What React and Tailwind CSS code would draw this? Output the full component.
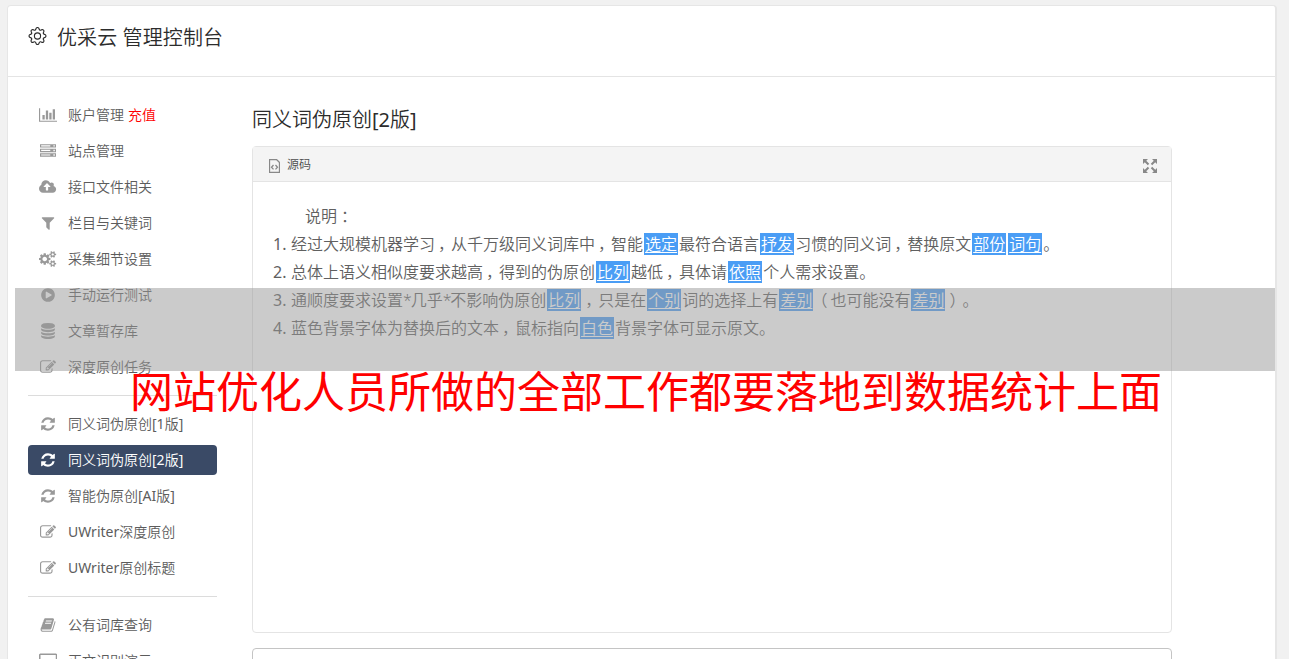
import React from 'react';
import { BsGear } from 'react-icons/bs';

/* ── Icon outlines: [viewBox width, path], all 1792 tall ── */
const icons = {
  chart: [
    2048,
    'M640 896v512h-256v-512h256zM1024 384v1024h-256v-1024h256zM2048 1536v128h-2048v-1536h128v1408h1920zM1408 640v768h-256v-768h256zM1792 256v1152h-256v-1152h256z',
  ],
  server: [
    1792,
    'M0 128h1792v384h-1792zM128 256v128h1024v-128zM1500 240v160h160v-160zM0 640h1792v384h-1792zM128 768v128h1024v-128zM1500 752v160h160v-160zM0 1152h1792v384h-1792zM128 1280v128h1024v-128zM1500 1264v160h160v-160z',
  ],
  cloud: [
    1920,
    'M1280 864q0-14-9-23l-352-352q-9-9-23-9t-23 9l-351 351q-10 12-10 24 0 14 9 23t23 9h224v352q0 13 9.5 22.5t22.5 9.5h192q13 0 22.5-9.5t9.5-22.5v-352h224q13 0 22.5-9.5t9.5-22.5zM1920 1152q0 159-112.5 271.5t-271.5 112.5h-1088q-185 0-316.5-131.5t-131.5-316.5q0-130 70-240t188-165q-2-30-2-43 0-212 150-362t362-150q156 0 285.5 87t188.5 231q71-62 166-62 106 0 181 75t75 181q0 76-41 138 130 31 213.5 135.5t83.5 238.5z',
  ],
  filter: [
    1792,
    'M1595 295q17 41-14 70l-493 493v742q0 42-39 59-13 5-25 5-27 0-45-19l-256-256q-19-19-19-45v-486l-493-493q-31-29-14-70 17-39 59-39h1280q42 0 59 39z',
  ],
  cogs: [
    1920,
    'M896 896q0-106-75-181t-181-75-181 75-75 181 75 181 181 75 181-75 75-181zm768 512q0-52-38-90t-90-38-90 38-38 90q0 53 37.5 90.5t90.5 37.5 90.5-37.5 37.5-90.5zm0-1024q0-52-38-90t-90-38-90 38-38 90q0 53 37.5 90.5t90.5 37.5 90.5-37.5 37.5-90.5zm-384 421v185q0 10-7 19.5t-16 10.5l-155 24q-11 35-32 76 34 48 90 115 7 11 7 20 0 12-7 19-23 30-82.5 89.5t-78.5 59.5q-11 0-21-7l-115-90q-37 19-77 31-11 108-23 155-7 24-30 24h-186q-11 0-20-7.5t-10-17.5l-23-153q-34-10-75-31l-118 89q-7 7-20 7-11 0-21-8-144-133-144-160 0-9 7-19 10-14 41-53t47-61q-23-44-35-82l-152-24q-10-1-17-9.5t-7-19.5v-185q0-10 7-19.5t16-10.5l155-24q11-35 32-76-34-48-90-115-7-11-7-20 0-12 7-20 22-30 82-89t79-59q11 0 21 7l115 90q34-18 77-32 11-108 23-154 7-24 30-24h186q11 0 20 7.5t10 17.5l23 153q34 10 75 31l118-89q8-7 20-7 11 0 21 8 144 133 144 160 0 8-7 19-12 16-42 54t-45 60q23 48 34 82l152 23q10 2 17 10.5t7 19.5zm640 533v140q0 16-149 31-12 27-30 52 51 113 51 138 0 4-4 7-122 71-124 71-8 0-46-47t-52-68q-20 2-30 2t-30-2q-14 21-52 68t-46 47q-2 0-124-71-4-3-4-7 0-25 51-138-18-25-30-52-149-15-149-31v-140q0-16 149-31 13-29 30-52-51-113-51-138 0-4 4-7 4-2 35-20t59-34 30-16q8 0 46 46.5t52 67.5q20-2 30-2t30 2q51-71 92-112l6-2q4 0 124 70 4 3 4 7 0 25-51 138 17 23 30 52 149 15 149 31zm0-1024v140q0 16-149 31-12 27-30 52 51 113 51 138 0 4-4 7-122 71-124 71-8 0-46-47t-52-68q-20 2-30 2t-30-2q-14 21-52 68t-46 47q-2 0-124-71-4-3-4-7 0-25 51-138-18-25-30-52-149-15-149-31v-140q0-16 149-31 13-29 30-52-51-113-51-138 0-4 4-7 4-2 35-20t59-34 30-16q8 0 46 46.5t52 67.5q20-2 30-2t30 2q51-71 92-112l6-2q4 0 124 70 4 3 4 7 0 25-51 138 17 23 30 52 149 15 149 31z',
  ],
  play: [
    1792,
    'M896 128q209 0 385.5 103t279.5 279.5 103 385.5-103 385.5-279.5 279.5-385.5 103-385.5-103-279.5-279.5-103-385.5 103-385.5 279.5-279.5 385.5-103zm384 823q32-18 32-55t-32-55l-544-320q-31-19-64-1-32 19-32 56v640q0 37 32 56 16 8 32 8 17 0 32-9z',
  ],
  database: [
    1792,
    'M896 768q237 0 443-43t325-127v170q0 69-103 128t-280 93.5-385 34.5-385-34.5-280-93.5-103-128v-170q119 84 325 127t443 43zm0 768q237 0 443-43t325-127v170q0 69-103 128t-280 93.5-385 34.5-385-34.5-280-93.5-103-128v-170q119 84 325 127t443 43zm0-384q237 0 443-43t325-127v170q0 69-103 128t-280 93.5-385 34.5-385-34.5-280-93.5-103-128v-170q119 84 325 127t443 43zm0-1152q208 0 385 34.5t280 93.5 103 128v128q0 69-103 128t-280 93.5-385 34.5-385-34.5-280-93.5-103-128v-128q0-69 103-128t280-93.5 385-34.5z',
  ],
  edit: [
    1792,
    'M888 1184l116-116-152-152-116 116v56h96v96h56zm440-720q-16-16-33 1l-350 350q-17 17-1 33t33-1l350-350q17-17 1-33zm80 594v190q0 119-84.5 203.5t-203.5 84.5h-832q-119 0-203.5-84.5t-84.5-203.5v-832q0-119 84.5-203.5t203.5-84.5h832q63 0 117 25 15 7 18 23 3 17-9 29l-49 49q-14 14-32 8-23-6-45-6h-832q-66 0-113 47t-47 113v832q0 66 47 113t113 47h832q66 0 113-47t47-113v-126q0-13 9-22l64-64q15-15 35-7t20 29zm-96-738l288 288-672 672h-288v-288zm444 132l-92 92-288-288 92-92q28-28 68-28t68 28l152 152q28 28 28 68t-28 68z',
  ],
  refresh: [
    1792,
    'M1639 1056q0 5-1 7-64 268-268 434.5t-478 166.5q-146 0-282.5-55t-243.5-157l-129 129q-19 19-45 19t-45-19-19-45v-448q0-26 19-45t45-19h448q26 0 45 19t19 45-19 45l-137 137q71 66 161 102t187 36q134 0 250-65t186-179q11-17 53-117 8-23 30-23h192q13 0 22.5 9.5t9.5 22.5zm25-800v448q0 26-19 45t-45 19h-448q-26 0-45-19t-19-45 19-45l138-138q-148-137-349-137-134 0-250 65t-186 179q-11 17-53 117-8 23-30 23h-199q-13 0-22.5-9.5t-9.5-22.5v-7q65-268 270-434.5t480-166.5q146 0 284 55.5t245 156.5l130-129q19-19 45-19t45 19 19 45z',
  ],
  book: [
    1792,
    'M1703 478q40 57 18 129l-275 906q-19 64-76.5 107.5t-122.5 43.5h-923q-77 0-148.5-53.5t-99.5-131.5q-24-67-2-127 0-4 3-27t4-37q1-8-3-21.5t-3-19.5q2-11 8-21t16.5-23.5 16.5-23.5q23-38 45-91.5t30-91.5q3-10 .5-30t-.5-28q3-11 17-28t17-23q21-36 42-92t25-90q1-9-2.5-32t.5-28q4-13 22-30.5t22-22.5q19-26 42.5-84.5t27.5-96.5q1-8-3-25.5t-2-26.5q2-8 9-18t18-23 17-21q8-12 16.5-30.5t15-35 16-36 19.5-32 26.5-23.5 36-11.5 47.5 5.5l-1 3q38-9 51-9h761q74 0 114 56t18 130l-274 906q-36 119-71.5 153.5t-128.5 34.5h-869q-27 0-38 15-11 16-1 43 24 70 144 70h923q29 0 56-15.5t35-41.5l300-987q7-22 5-57 38 15 59 43zm-1064 2q-4 13 2 22.5t20 9.5h608q13 0 25.5-9.5t16.5-22.5l21-64q4-13-2-22.5t-20-9.5h-608q-13 0-25.5 9.5t-16.5 22.5zm-83 256q-4 13 2 22.5t20 9.5h608q13 0 25.5-9.5t16.5-22.5l21-64q4-13-2-22.5t-20-9.5h-608q-13 0-25.5 9.5t-16.5 22.5z',
  ],
  desktop: [
    2048,
    'M160 64h1728q66 0 113 47t47 113v1088q0 66-47 113t-113 47h-1728q-66 0-113-47t-47-113v-1088q0-66 47-113t113-47zM170 234v830h1708v-830z',
  ],
};

const Icon = ({ name }) => {
  const [width, path] = icons[name];
  return (
    <svg viewBox={`0 0 ${width} 1792`} className="h-4 w-auto" fill="currentColor" fillRule="evenodd">
      <path d={path} />
    </svg>
  );
};

const menuGroups = [
  [
    { icon: 'chart', label: '账户管理', extra: '充值' },
    { icon: 'server', label: '站点管理' },
    { icon: 'cloud', label: '接口文件相关' },
    { icon: 'filter', label: '栏目与关键词' },
    { icon: 'cogs', label: '采集细节设置' },
    { icon: 'play', label: '手动运行测试' },
    { icon: 'database', label: '文章暂存库' },
    { icon: 'edit', label: '深度原创任务' },
  ],
  [
    { icon: 'refresh', label: '同义词伪原创[1版]' },
    { icon: 'refresh', label: '同义词伪原创[2版]', active: true },
    { icon: 'refresh', label: '智能伪原创[AI版]' },
    { icon: 'edit', label: 'UWriter深度原创' },
    { icon: 'edit', label: 'UWriter原创标题' },
  ],
  [
    { icon: 'book', label: '公有词库查询' },
    { icon: 'desktop', label: '正文识别演示' },
  ],
];

/* Words in braces are the replaced ones */
const notes = [
  '经过大规模机器学习，从千万级同义词库中，智能{选定}最符合语言{抒发}习惯的同义词，替换原文{部份}{词句}。',
  '总体上语义相似度要求越高，得到的伪原创{比列}越低，具体请{依照}个人需求设置。',
  '通顺度要求设置*几乎*不影响伪原创{比列}，只是在{个别}词的选择上有{差别}（也可能没有{差别}）。',
  '蓝色背景字体为替换后的文本，鼠标指向{白色}背景字体可显示原文。',
];

/* Moves punctuation towards the middle of its cell */
const punctuation = {
  '，': 'pl-[3px] -mr-[3px]',
  '：': 'pl-1 -mr-1',
  '（': '-ml-[3px] pr-[3px]',
  '）': 'pl-[3px] -mr-[3px]',
  '*': '-tracking-[1.2px]',
};

const NoteText = ({ text }) =>
  text.split(/(\{.+?\}|[，：（）*])/).map((part, i) => {
    if (part.startsWith('{')) {
      return (
        <span key={i} className="mx-px bg-[#4a9df5] px-px text-white underline underline-offset-2">
          {part.slice(1, -1)}
        </span>
      );
    }
    if (punctuation[part]) {
      return <span key={i} className={punctuation[part]}>{part}</span>;
    }
    return part;
  });

/* Latin runs are set one step heavier than the Chinese ones */
const Label = ({ text }) =>
  text.split(/([A-Za-z0-9[\]]+)/).map((part, i) =>
    i % 2 ? <span key={i} className="font-normal">{part}</span> : part
  );

const Sidebar = () => (
  <nav className="w-[189px] shrink-0 text-sm text-[#5c5c5c]">
    {menuGroups.map((group, g) => (
      <ul key={g} className={g > 0 ? 'mt-[13px] space-y-1.5 border-t border-[#dcdcdc] pt-[13px]' : 'space-y-1.5'}>
        {group.map((item) => (
          <li
            key={item.label}
            className={
              item.active
                ? 'flex h-[30px] items-center rounded bg-[#3a4a66] text-white'
                : 'flex h-[30px] items-center'
            }
          >
            <span className={item.active ? 'flex w-10 justify-center' : 'flex w-10 justify-center text-[#999]'}>
              <Icon name={item.icon} />
            </span>
            <span className="whitespace-nowrap">
              <Label text={item.label} />
              {item.extra && <span className="ml-1 text-[#f00]">{item.extra}</span>}
            </span>
          </li>
        ))}
      </ul>
    ))}
  </nav>
);

const Editor = () => (
  <section className="h-[487px] rounded border border-[#e4e4e4]">
    <div className="flex h-[35px] items-center justify-between border-b border-[#e4e4e4] bg-[#f4f4f4] pr-3.5 pl-4">
      <div className="flex items-center text-xs text-[#4c4c4c]">
        <svg viewBox="0 0 11 14" className="mt-1 mr-[7px] h-3.5 w-[11px]" fill="none" stroke="#888" strokeWidth="1.3">
          <path d="M.5.5h7l3 3v10h-10z" />
          <path d="M4.5 6 2.5 8.2l2 2.2M6.5 6l2 2.2-2 2.2" />
        </svg>
        <span className="pt-0.5">源码</span>
      </div>
      <svg viewBox="0 0 14 14" className="mt-1 h-3.5 w-3.5" fill="#888" stroke="#888" strokeWidth="2">
        <path stroke="none" d="M0 0h5L0 5zM14 0v5L9 0zM0 14V9l5 5zM14 14H9l5-5z" />
        <path d="m2 2 3.5 3.5M12 2 8.5 5.5M2 12l3.5-3.5M12 12 8.5 8.5" />
      </svg>
    </div>
    <div className="pt-5 pl-5 text-base leading-7 text-[#606060] [text-spacing-trim:space-all]">
      <p className="h-7 pl-8"><NoteText text="说明：" /></p>
      <ol>
        {notes.map((note, i) => (
          <li key={note} className="flex h-7 whitespace-nowrap">
            <span className="w-[18px] font-normal">{i + 1}.</span>
            <span><NoteText text={note} /></span>
          </li>
        ))}
      </ol>
    </div>
  </section>
);

const App = () => (
  <div className="relative h-[659px] w-[1289px] overflow-hidden bg-[#f1f1f1] pt-[5px] pl-[7px] font-['Noto_Sans','Noto_Sans_CJK_SC',sans-serif] font-[350]">
    <div className="h-[700px] w-[1270px] rounded-t border border-r-2 border-[#e6e6e6] bg-white">
      <header className="flex h-[71px] items-start border-b border-[#e4e4e4] pt-4 pl-5 text-[#2c2c2c]">
        <BsGear className="mt-[5px] mr-2.5 h-[18px] w-[19px]" />
        <h1 className="text-xl leading-8 tracking-[0.1px]">优采云 管理控制台</h1>
      </header>
      <div className="flex pt-[23px] pl-5">
        <Sidebar />
        <main className="ml-[35px] w-[920px]">
          <h2 className="mb-[6px] h-10 text-xl leading-10 text-[#2c2c2c]">
            <Label text="同义词伪原创[2版]" />
          </h2>
          <Editor />
          <div className="mt-[15px] h-20 rounded border border-[#c4c4c4]" />
        </main>
      </div>
    </div>

    {/* Translucent strip with the caption hanging below it */}
    <div className="absolute top-[288px] left-[15px] h-[83px] w-[1260px] bg-[#979797]/50" />
    <p className="absolute top-[367px] left-[130px] text-[43px] leading-[50px] font-normal whitespace-nowrap text-[#f00]">
      网站优化人员所做的全部工作都要落地到数据统计上面
    </p>
  </div>
);

export default App;
